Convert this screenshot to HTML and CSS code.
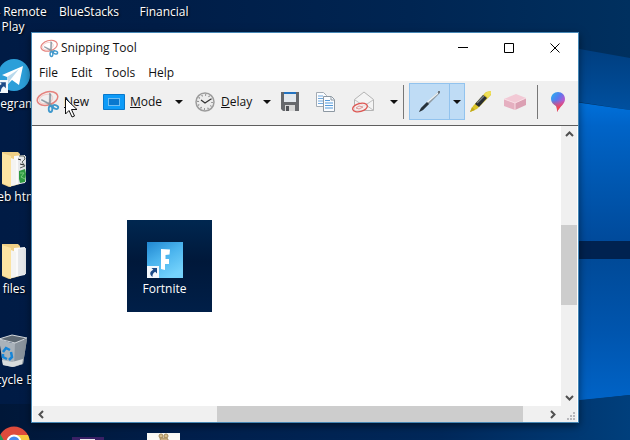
FILE: index.html
```html
<!DOCTYPE html>
<html lang="en">
<head>
<meta charset="utf-8">
<title>Snipping Tool</title>
<link rel="stylesheet" href="styles.css">
</head>
<body>
<svg width="0" height="0" class="defs" aria-hidden="true">
  <defs>
    <symbol id="snip" viewBox="0 0 24 24">
      <ellipse cx="11.500" cy="8.500" rx="10.500" ry="6.500" fill="none" stroke="#e5827d" stroke-width="1.500" transform="rotate(-16 11.5 8.500)"/>
      <ellipse cx="10" cy="9" rx="7" ry="4.500" fill="none" stroke="#f2cbc8" stroke-width="1" transform="rotate(-16 10 9)"/>
      <path d="M13.500 3l1.500 1-.5 11-1.500 1zM5 10l1-.5 12 6-1 1.500z" fill="#8d9aa5" stroke="#7f8b95" stroke-width=".4"/>
      <ellipse cx="14.500" cy="19" rx="1.800" ry="3" fill="none" stroke="#3f98cc" stroke-width="1.800"/>
      <ellipse cx="19.500" cy="17" rx="2.800" ry="1.800" fill="none" stroke="#3f98cc" stroke-width="1.800" transform="rotate(20 19.500 17)"/>
    </symbol>
    <symbol id="shortcut" viewBox="0 0 12 12">
      <path d="M0 0h12v12H0z" fill="#f4f8fc"/>
      <path d="M4.500 2H10v5.500L8.200 5.700C6 7 5.400 8.500 5.500 11 2 8.500 2.800 5.500 6.300 3.800z" fill="#1d4b88"/>
    </symbol>
    <symbol id="folder" viewBox="0 0 26 36">
      <path d="M1 1l16 0 2 2v30L8 36 1 33z" fill="#eecf86"/>
      <path d="M13 5l11-1v28l-11 2z" fill="#fafafa"/>
      <path d="M17 6l8-1v26l-8 2z" fill="#e6e8ea"/>
      <path d="M1 2l9 3v31l-9-4z" fill="#fbe3a2"/>
      <path d="M10 7l5 2v25l-5 1z" fill="#f4f4f2"/>
    </symbol>
    <linearGradient id="paint" x1="0" y1="0" x2="1" y2="1">
      <stop offset="0" stop-color="#21b7ef"/><stop offset=".4" stop-color="#5a78ef"/><stop offset=".65" stop-color="#b45bd0"/><stop offset="1" stop-color="#f04460"/>
    </linearGradient>
    <linearGradient id="paint-tip" x1="0" y1="0" x2="0" y2="1">
      <stop offset=".4" stop-color="#f04460" stop-opacity="0"/><stop offset=".8" stop-color="#f0484e"/>
    </linearGradient>
    <linearGradient id="game" x1="0" y1="0" x2=".6" y2="1">
      <stop offset="0" stop-color="#1f86d0"/><stop offset=".5" stop-color="#4bb4ee"/><stop offset="1" stop-color="#74d2fb"/>
    </linearGradient>
    <linearGradient id="night" x1="0" y1="0" x2="1" y2="0">
      <stop offset="0" stop-color="#001b45"/><stop offset=".25" stop-color="#001d47"/><stop offset=".65" stop-color="#002552"/><stop offset="1" stop-color="#00305f"/>
    </linearGradient>
    <linearGradient id="pane-top" x1="0" y1="0" x2="0" y2="1">
      <stop offset="0" stop-color="#0073de"/><stop offset=".2" stop-color="#0064c8"/><stop offset=".6" stop-color="#0057b0"/><stop offset="1" stop-color="#004a9b"/>
    </linearGradient>
    <linearGradient id="pane-low" x1="0" y1="0" x2="0" y2="1">
      <stop offset="0" stop-color="#004a98"/><stop offset=".5" stop-color="#0055ae"/><stop offset="1" stop-color="#0064c8"/>
    </linearGradient>
    <linearGradient id="beam" x1="0" y1="0" x2="0" y2="1">
      <stop offset="0" stop-color="#003c7c"/><stop offset="1" stop-color="#00509f"/>
    </linearGradient>
    <linearGradient id="floor" x1="0" y1="0" x2="1" y2="0">
      <stop offset="0" stop-color="#001738"/><stop offset=".3" stop-color="#001f4c"/><stop offset=".7" stop-color="#00285a"/><stop offset="1" stop-color="#003f7c"/>
    </linearGradient>
  </defs>
</svg>

<main class="desktop">
  <svg class="wallpaper" viewBox="0 0 630 440" preserveAspectRatio="none" aria-hidden="true">
    <rect width="630" height="440" fill="url(#night)"/>
    <path d="M540 42l90 16v52l-90-14z" fill="url(#beam)"/>
    <path d="M540 97l90 13v131h-90z" fill="url(#pane-top)"/>
    <rect x="540" y="241" width="90" height="18" fill="#002250"/>
    <path d="M540 259h90v136l-90 10z" fill="url(#pane-low)"/>
    <path d="M0 404h540l90-9v45H0z" fill="url(#floor)"/>
  </svg>

  <div class="shortcut s-remote"><span>PS4 Remote Play</span></div>
  <div class="shortcut s-blue"><span>BlueStacks</span></div>
  <div class="shortcut s-fin"><span>Financial</span></div>
  <div class="shortcut s-telegram">
    <svg width="44" height="36" viewBox="-6 0 44 36" aria-hidden="true">
      <circle cx="20" cy="17" r="16" fill="#2c9fd9"/>
      <path d="M8 17l21-9-4 19-7-5-4 4-1-7z" fill="#fff"/><path d="M13 19l12-8-8 10-3 5z" fill="#b8d9ec"/>
      <use href="#shortcut" x="1" y="22" width="13" height="13"/>
    </svg>
    <span>Telegram</span>
  </div>
  <div class="shortcut s-web">
    <svg width="26" height="36" viewBox="0 0 26 36" aria-hidden="true">
      <use href="#folder" width="26" height="36"/>
      <path d="M18 5l5 0 1 3-3 3 3 4-5 2" fill="none" stroke="#59635c"/><path d="M17 8l3 1M19 13l4 1" stroke="#222"/>
      <path d="M18 20l6-2 1 5-1 8-5 1-1-4z" fill="#2f9c43"/><path d="M19 22l4 0-3 4 4 2" fill="none" stroke="#7ccb82"/>
    </svg>
    <span>web html</span>
  </div>
  <div class="shortcut s-files">
    <svg width="26" height="36" viewBox="0 0 26 36" aria-hidden="true"><use href="#folder" width="26" height="36"/></svg>
    <span>files</span>
  </div>
  <div class="shortcut s-bin">
    <svg width="30" height="36" viewBox="0 0 30 36" aria-hidden="true">
      <path d="M1 5l13 4 15-4-4 25-11 3-9-2z" fill="#a9b2ba"/>
      <path d="M17 9l12-4-4 25-9 3z" fill="#8a949d"/>
      <path d="M1 5l13-4 15 3-12 5z" fill="#5d6872" stroke="#d3d8dc"/>
      <path d="M4 26l10 2 11-3-1 5-9 3-10-2z" fill="#d8dcdc"/>
      <path d="M5 18l3-4 4 2M13 18l1 5-3 3M9 25l-4-2v-3" fill="none" stroke="#1685d8" stroke-width="2.500"/>
    </svg>
    <span>Recycle Bin</span>
  </div>
  <div class="shortcut s-chrome">
    <svg width="32" height="32" viewBox="0 0 32 32" aria-hidden="true">
      <circle cx="16" cy="16" r="15.500" fill="#de4b3c"/>
      <path d="M2.500 8.500A15.500 15.500 0 0 0 14 31.500l5-9-11-4z" fill="#20985a"/>
      <path d="M16 9h14a15.500 15.500 0 0 1-16 22z" fill="#f8ca3f"/>
      <circle cx="16" cy="16" r="7.500" fill="#fff"/><circle cx="16" cy="16" r="5.500" fill="#4689ed"/>
    </svg>
  </div>
  <div class="shortcut s-archive">
    <svg width="32" height="32" viewBox="0 0 32 32" aria-hidden="true"><path d="M0 0h32v32H0z" fill="#3a2166"/><path d="M8 2h15v30H8z" fill="#ece9ef"/></svg>
  </div>
  <div class="shortcut s-game">
    <svg width="33" height="33" viewBox="0 0 33 33" aria-hidden="true"><path d="M0 0h33v33H0z" fill="#fbfaf6"/><circle cx="14" cy="3" r="2" fill="#d9c08d" stroke="#a58b5c"/><circle cx="19" cy="3" r="2" fill="#d9c08d" stroke="#a58b5c"/><path d="M13 5h7l1 2 4 2-1 9H12l2-8z" fill="#cbb183" stroke="#a58b5c"/></svg>
  </div>

  <section class="window" aria-label="Snipping Tool">
    <header class="titlebar">
      <svg width="19" height="19" aria-hidden="true"><use href="#snip" width="19" height="19"/></svg>
      <h1>Snipping Tool</h1>
      <button class="caption" aria-label="Minimize"><svg width="11" height="11" viewBox="0 0 11 11"><path d="M0 4.500h10" stroke="#000"/></svg></button>
      <button class="caption" aria-label="Maximize"><svg width="11" height="11" viewBox="0 0 11 11"><path d="M.5.5h9v9h-9z" fill="none" stroke="#000"/></svg></button>
      <button class="caption" aria-label="Close"><svg width="11" height="11" viewBox="0 0 11 11"><path d="M.5.5l9 9M9.500.5l-9 9" stroke="#000"/></svg></button>
    </header>
    <nav class="menubar">
      <button>File</button><button>Edit</button><button>Tools</button><button>Help</button>
    </nav>
    <div class="toolbar" role="toolbar" aria-label="Snip tools">
      <button class="tool labelled"><svg width="24" height="24" aria-hidden="true"><use href="#snip" width="24" height="24"/></svg><span><u>N</u>ew</span></button>
      <button class="tool labelled mode">
        <svg width="22" height="16" viewBox="0 0 22 16" aria-hidden="true"><path d="M.5.5h21v15H.5z" fill="#0d9bf8" stroke="#0878cc"/><path d="M5.500 4.500h11v7h-11z" fill="#0878cf" stroke="#d8f0ff" stroke-dasharray="1 1"/></svg>
        <span><u>M</u>ode</span></button>
      <button class="tool" aria-label="Mode options"><i class="caret"></i></button>
      <button class="tool labelled delay">
        <svg width="20" height="20" viewBox="0 0 20 20" aria-hidden="true"><circle cx="10" cy="10" r="9" fill="#ececec" stroke="#9c9c9c" stroke-width="1.500"/><circle cx="10" cy="10" r="7" fill="none" stroke="#777" stroke-width="1.500" stroke-dasharray="1 2.660"/><path d="M6 8l4 3 6-4" fill="none" stroke="#333" stroke-width="1.200"/></svg>
        <span><u>D</u>elay</span></button>
      <button class="tool" aria-label="Delay options"><i class="caret"></i></button>
      <button class="tool" aria-label="Save snip"><svg width="18" height="19" viewBox="0 0 18 19"><path d="M0 0h18v19H2l-2-2z" fill="#66686c"/><path d="M3 0h12v10H3z" fill="#e3e8ed"/><path d="M3 0h12v2H3z" fill="#2474c2"/><path d="M4 13h10v6H4z" fill="#d7d7d7"/><path d="M5 14h3v5H5z" fill="#505257"/></svg></button>
      <button class="tool" aria-label="Copy"><svg width="19" height="20" viewBox="0 0 19 20"><path d="M.5.5h7l3 3v11H.5z" fill="#fafcff" stroke="#a3abb3"/><path d="M2 4h5M2 6.500h6M2 9h6M2 11.500h6" stroke="#70a9df"/><path d="M7.500 4.500h8l3 3v12h-11z" fill="#fafcff" stroke="#8d98a2"/><path d="M15 5v3h3" fill="none" stroke="#8d98a2"/><path d="M9 8.500h5M9 11h8M9 13.500h8M9 16h8" stroke="#559ad9"/></svg></button>
      <button class="tool mail" aria-label="Send snip"><svg width="23" height="22" viewBox="0 0 23 22"><path d="M2.500 8.500L12 1l9.500 7.500v11h-19z" fill="#f4f4f4" stroke="#b4b4b4"/><path d="M3 9l9 6 9-6M21 19l-7-5" fill="none" stroke="#c0c0c0"/><ellipse cx="8" cy="16.500" rx="7.500" ry="4" fill="#f6e9e8" fill-opacity=".7" stroke="#dd5652" stroke-width="1.300" transform="rotate(-14 8 16.500)"/><path d="M4 17l3-2 4 1-4 2z" fill="none" stroke="#d99"/></svg></button>
      <button class="tool" aria-label="Send options"><i class="caret"></i></button>
      <i class="rule"></i>
      <div class="split">
        <button class="tool" aria-label="Pen" aria-pressed="true"><svg width="23" height="22" viewBox="0 0 23 22"><path d="M1 21l2-4L20 1l2 0-1 2L5 19z" fill="#8f9aa2"/><path d="M9 11.500L20 2" stroke="#eef4f7" stroke-width="1.200"/><path d="M1 21l2-4 6-6 2 2-6 6z" fill="#27323b"/><path d="M20 0l2 0v2l-2 1z" fill="#69737b"/></svg></button>
        <button class="tool" aria-label="Pen options"><i class="caret"></i></button>
      </div>
      <button class="tool" aria-label="Highlighter"><svg width="22" height="22" viewBox="0 0 22 22"><path d="M0 21l3-6L16 1l5-1v4L7 18z" fill="#dcc52a"/><path d="M5 13l8-9 4 3-8 9z" fill="#292d32"/><path d="M7 12l7-7" stroke="#777f88" stroke-width="1.500"/><path d="M14 3l3-2 4-1v3l-3 4z" fill="#efe05a"/><path d="M0 21l2-5 3 3z" fill="#c2aa17"/></svg></button>
      <button class="tool" aria-label="Eraser"><svg width="22" height="16" viewBox="0 0 22 16"><path d="M0 5l12-5 10 4-11 5z" fill="#f2c9d5"/><path d="M0 5l11 4v7L0 12z" fill="#e5afc0"/><path d="M11 9l11-5v7l-11 5z" fill="#dba0b3"/><path d="M0 5l11 4 11-5M11 9v7" fill="none" stroke="#f8dce4"/></svg></button>
      <i class="rule"></i>
      <button class="tool" aria-label="Edit with Paint 3D"><svg width="14" height="20" viewBox="0 0 14 20"><path d="M7 0c4 0 7 3 7 7 0 5-5 7-8 13 0-3 0-4-1-6C2 12 0 10 0 7c0-4 3-7 7-7z" fill="url(#paint)"/><path d="M7 0c4 0 7 3 7 7 0 5-5 7-8 13 0-3 0-4-1-6C2 12 0 10 0 7c0-4 3-7 7-7z" fill="url(#paint-tip)"/></svg></button>
    </div>
    <div class="viewport">
      <div class="canvas">
        <figure class="capture">
          <svg width="36" height="36" viewBox="0 0 36 36" aria-hidden="true">
            <path d="M0 0h36v36H0z" fill="url(#game)"/>
            <path d="M14 7l9 .5-.5 5-4 .5v4h3.500v5H18v6l-4-1z" fill="#fff"/>
            <use href="#shortcut" x="0" y="24" width="12" height="12"/>
          </svg>
          <figcaption>Fortnite</figcaption>
        </figure>
      </div>
      <div class="scroll vertical">
        <button aria-label="Scroll up"><svg width="9" height="9" viewBox="0 0 9 9"><path d="M1 6l3.500-3.500L8 6" fill="none" stroke="#505050" stroke-width="2"/></svg></button>
        <i class="before"></i><i class="thumb"></i><i class="after"></i>
        <button aria-label="Scroll down"><svg width="9" height="9" viewBox="0 0 9 9"><path d="M1 3l3.500 3.500L8 3" fill="none" stroke="#505050" stroke-width="2"/></svg></button>
      </div>
      <div class="scroll horizontal">
        <button aria-label="Scroll left"><svg width="9" height="9" viewBox="0 0 9 9"><path d="M6 1L2.500 4.500 6 8" fill="none" stroke="#505050" stroke-width="2"/></svg></button>
        <i class="before"></i><i class="thumb"></i><i class="after"></i>
        <button aria-label="Scroll right"><svg width="9" height="9" viewBox="0 0 9 9"><path d="M3 1l3.500 3.500L3 8" fill="none" stroke="#505050" stroke-width="2"/></svg></button>
      </div>
      <div class="grip"><svg width="8" height="8" viewBox="0 0 8 8"><path d="M6 0h2v2H6zM3 3h2v2H3zM6 3h2v2H6zM0 6h2v2H0zM3 6h2v2H3zM6 6h2v2H6z" fill="#b8b8bc"/></svg></div>
    </div>
  </section>

  <svg class="cursor" width="13" height="20" viewBox="0 0 13 20" aria-hidden="true"><path d="M.5.5v15.500l3.500-3.500 3 6.500 2.500-1-3-6.500h5.500z" fill="#fff" stroke="#111"/></svg>
</main>
</body>
</html>
```
FILE: styles.css
```css
* { box-sizing: border-box; }

body {
  margin: 0;
  font: 12px/16px "Open Sans", "Noto Sans", sans-serif;
  color: #111;
}

svg { display: block; flex: none; }
.defs { position: absolute; }

button {
  margin: 0;
  padding: 0;
  border: 0;
  background: none;
  font: inherit;
  color: inherit;
}

.desktop {
  position: relative;
  height: 100vh;
  overflow: hidden;
  background: #001a42;
}

.wallpaper { width: 100%; height: 100%; }

/* Icons on the desktop */
.shortcut {
  position: absolute;
  width: 76px;
  display: flex;
  flex-direction: column;
  align-items: center;
  gap: 2px;
  color: #fff;
  text-align: center;
  text-shadow: 1px 1px 2px #000;
}

.shortcut span { white-space: nowrap; }
.s-remote { left: -25px; top: 4px; }
.s-remote span { white-space: normal; line-height: 15px; }
.s-blue { left: 51px; top: 4px; }
.s-fin { left: 126px; top: 4px; }
.s-telegram { left: -28px; top: 58px; }
.s-web { left: -24px; top: 151px; }
.s-files { left: -24px; top: 243px; }
.s-bin { left: -25px; top: 334px; }
.s-chrome { left: -24px; top: 426px; }
.s-archive { left: 50px; top: 437px; }
.s-game { left: 125px; top: 433px; }

/* Application window */
.window {
  position: absolute;
  inset: 32px 51px 17px 31px;
  display: flex;
  flex-direction: column;
  border: 1px solid #4687b5;
  background: #fff;
  box-shadow: 0 3px 8px rgba(0, 0, 0, 0.5);
}

.titlebar {
  display: flex;
  align-items: center;
  height: 30px;
  padding: 0 1px 0 8px;
  gap: 2px;
}

.titlebar h1 {
  flex: 1;
  margin: 0;
  font-size: 12px;
  font-weight: 400;
}

.caption {
  display: grid;
  place-items: center;
  width: 44px;
  height: 28px;
}

.menubar {
  display: flex;
  align-items: flex-end;
  gap: 13px;
  height: 18px;
  padding-left: 7px;
}

.toolbar {
  display: grid;
  grid-template-columns: 64px 68px 22px 66px 22px 24px 46px 36px 19px 1px 61px 32px 36px 5px 1fr;
  align-items: center;
  height: 45px;
  padding: 0 0 3px 4px;
  border-bottom: 1px solid #5f5f5f;
  background: #f0f0f0;
}

.tool {
  display: flex;
  align-items: center;
  justify-content: center;
  height: 36px;
}

.labelled { justify-content: flex-start; gap: 4px; }
.mode { padding-left: 3px; gap: 5px; }
.delay { padding-left: 5px; gap: 6px; }
.mail { justify-content: flex-start; padding-left: 4px; }

.caret {
  border: 4px solid transparent;
  border-top-color: #111;
  border-bottom: 0;
}

.rule {
  justify-self: end;
  width: 1px;
  height: 34px;
  background: #777;
}

.split {
  justify-self: end;
  display: grid;
  grid-template-columns: 39px 15px;
  border: 1px solid #92c3ee;
  background: #bfdcf5;
}

.split .tool { height: 35px; }
.split .tool + .tool { border-left: 1px solid #92c3ee; }

.viewport {
  flex: 1;
  min-height: 0;
  display: grid;
  grid-template: 1fr 16px / 1fr 16px;
  padding: 0 1px 1px;
}

.canvas { padding: 94px; }

.capture {
  display: flex;
  flex-direction: column;
  align-items: center;
  gap: 3px;
  width: 85px;
  height: 92px;
  margin: 0;
  padding: 22px 10px 0 0;
  background: linear-gradient(#002750, #00183a 45%, #001f48);
  color: #fff;
}

.scroll { display: flex; background: #f0f0f0; }
.scroll button { display: grid; place-items: center; flex: 0 0 17px; }
.vertical { flex-direction: column; }
.thumb { background: #cdcdcd; }
.vertical .before { flex: 82; }
.vertical .thumb { flex: 79; }
.vertical .after { flex: 84; }
.horizontal .before { flex: 167; }
.horizontal .thumb { flex: 306; }
.horizontal .after { flex: 21; }

.grip {
  display: grid;
  place-items: end;
  padding: 2px;
  background: #f0f0f0;
}

.cursor { position: absolute; left: 65px; top: 98px; }
```
